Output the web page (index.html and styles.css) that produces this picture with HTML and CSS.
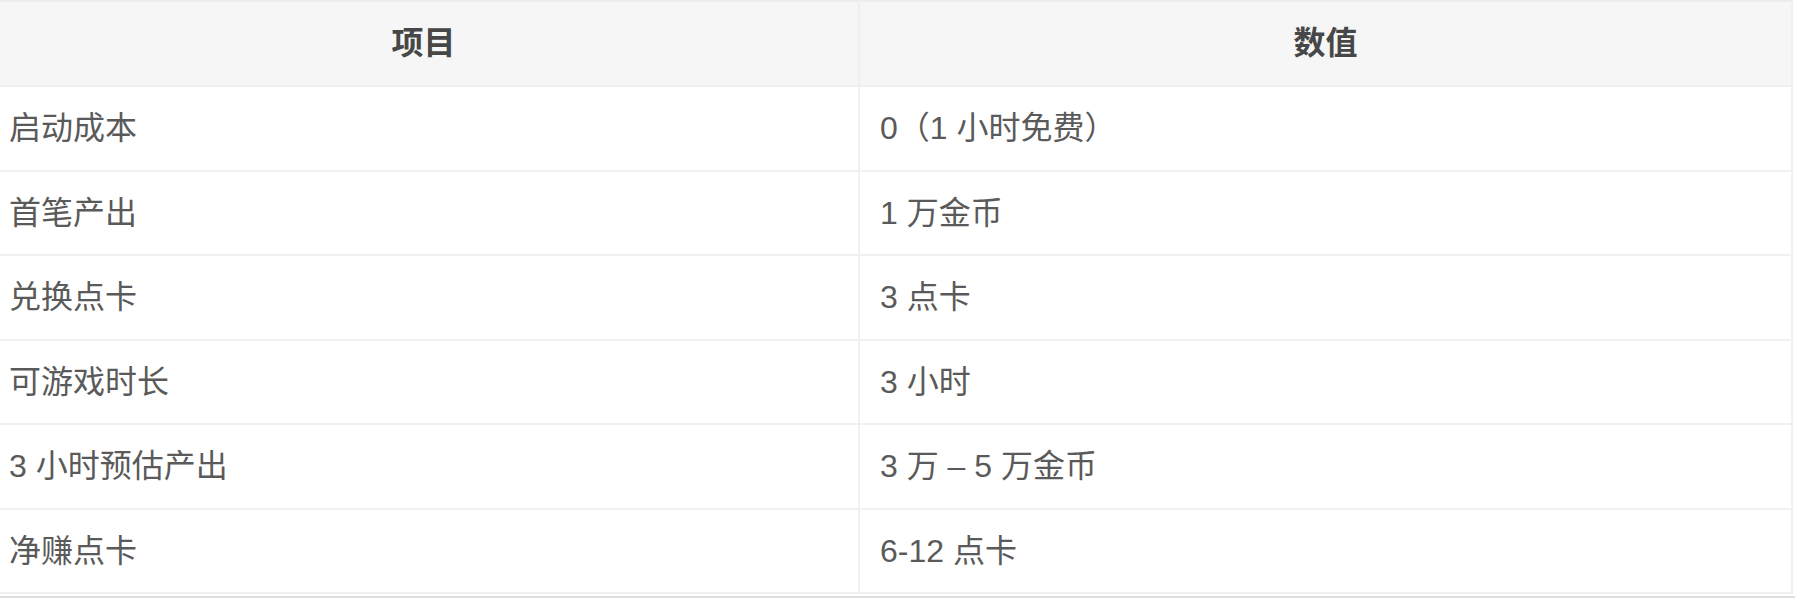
FILE: index.html
```html
<!DOCTYPE html>
<html lang="zh-CN">
<head>
<meta charset="utf-8">
<title>表格</title>
<link rel="stylesheet" href="styles.css">
</head>
<body>
<div class="frame">
  <table class="data">
    <thead>
      <tr><th class="col-a">项目</th><th class="col-b">数值</th></tr>
    </thead>
    <tbody>
      <tr><td>启动成本</td><td>0（1 小时免费）</td></tr>
      <tr><td>首笔产出</td><td>1 万金币</td></tr>
      <tr><td>兑换点卡</td><td>3 点卡</td></tr>
      <tr><td>可游戏时长</td><td>3 小时</td></tr>
      <tr><td>3 小时预估产出</td><td>3 万 – 5 万金币</td></tr>
      <tr><td>净赚点卡</td><td>6-12 点卡</td></tr>
    </tbody>
  </table>
</div>
</body>
</html>
```
FILE: styles.css
```css
html, body {
  margin: 0;
  padding: 0;
  background: #ffffff;
}
body {
  font-family: "Liberation Sans", "Noto Sans CJK SC", sans-serif;
  color: #5a5a5a;
  overflow: hidden;
}
.frame {
  width: 1795px;
  height: 598px;
  overflow: hidden;
  box-sizing: border-box;
  border-bottom: 2px solid #dedede;
}
.data {
  width: 1804px;
  margin-left: -11px;
  border-collapse: collapse;
  table-layout: fixed;
  border-top: 2px solid #ececec;
  border-right: 2px solid #eeeeee;
  border-bottom: 2px solid #eeeeee;
}
.data .col-a { width: 829px; }
.data .col-b { width: 891px; }
.data th {
  background: #f6f6f6;
  font-weight: bold;
  color: #474747;
  font-size: 32px;
  line-height: 47px;
  padding: 18px 20px 18px 20px;
  text-align: center;
  border-bottom: 2px solid #efefef;
  border-right: 2px solid #efefef;
}
.data td {
  font-size: 32px;
  line-height: 47px;
  padding: 18px 20px 17.5px 20px;
  text-align: left;
  border-bottom: 2px solid #f0f0f0;
  border-right: 2px solid #f0f0f0;
  white-space: nowrap;
}
```
